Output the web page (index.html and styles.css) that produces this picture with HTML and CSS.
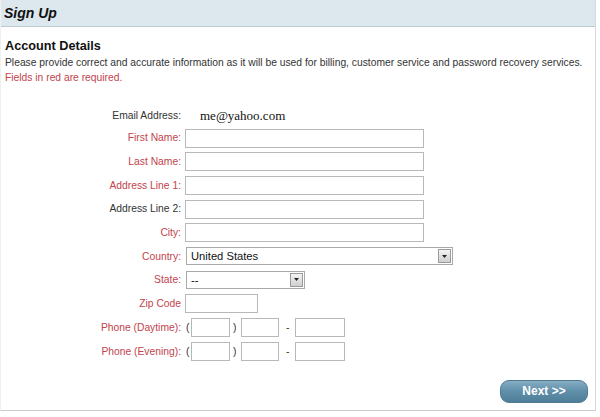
FILE: index.html
```html
<!DOCTYPE html>
<html lang="en">
<head>
    <meta charset="UTF-8">
    <title>Sign Up</title>
    <link rel="stylesheet" href="styles.css">
</head>
<body>
    <div class="page">
        <div class="header">Sign Up</div>

        <div class="intro">
            <h2>Account Details</h2>
            <p>Please provide correct and accurate information as it will be used for billing, customer service and password recovery services.</p>
            <p class="required">Fields in red are required.</p>
        </div>

        <div class="form">
            <label class="plain">Email Address:</label>
            <div class="email">me@yahoo.com</div>

            <label for="firstName">First Name:</label>
            <div><input type="text" id="firstName" class="wide"></div>

            <label for="lastName">Last Name:</label>
            <div><input type="text" id="lastName" class="wide"></div>

            <label for="addr1">Address Line 1:</label>
            <div><input type="text" id="addr1" class="wide"></div>

            <label for="addr2" class="plain">Address Line 2:</label>
            <div><input type="text" id="addr2" class="wide"></div>

            <label for="city">City:</label>
            <div><input type="text" id="city" class="wide"></div>

            <label for="country">Country:</label>
            <div>
                <span class="select country">
                    <select id="country">
                        <option>United States</option>
                        <option>Canada</option>
                    </select>
                    <span class="arrow"><svg width="5" height="3" viewBox="0 0 5 3"><path d="M0 0H5L2.5 3Z" fill="#222"/></svg></span>
                </span>
            </div>

            <label for="state">State:</label>
            <div>
                <span class="select state">
                    <select id="state">
                        <option>--</option>
                    </select>
                    <span class="arrow"><svg width="5" height="3" viewBox="0 0 5 3"><path d="M0 0H5L2.5 3Z" fill="#222"/></svg></span>
                </span>
            </div>

            <label for="zip">Zip Code</label>
            <div><input type="text" id="zip" class="zip"></div>

            <label>Phone (Daytime):</label>
            <div class="phone">
                <span>(</span><input type="text" class="area"><span class="close">)</span><input type="text" class="prefix"><span class="dash">-</span><input type="text" class="line">
            </div>

            <label>Phone (Evening):</label>
            <div class="phone">
                <span>(</span><input type="text" class="area"><span class="close">)</span><input type="text" class="prefix"><span class="dash">-</span><input type="text" class="line">
            </div>
        </div>

        <div class="footer">
            <button class="next">Next &gt;&gt;</button>
        </div>
    </div>
</body>
</html>
```

FILE: styles.css
```css
body {
    margin: 0;
    font-family: "Liberation Sans", Arial, sans-serif;
    background-color: #fff;
    color: #222;
}

.page {
    width: 594px;
    height: 410px;
    border-right: 1px solid #d4d9dc;
    border-bottom: 1px solid #c8cccf;
    border-left: 1px solid #eef0f1;
}

.header {
    height: 26px;
    line-height: 27px;
    background-color: #dce7ee;
    border-bottom: 1px solid #bccad3;
    padding-left: 3px;
    font-size: 14px;
    font-weight: bold;
    font-style: italic;
    color: #111;
}

.intro {
    padding: 11px 0 0 4px;
}

.intro h2 {
    font-size: 12.7px;
    line-height: 16px;
    margin: 0 0 1px;
    color: #111;
}

.intro p {
    font-size: 10.3px;
    line-height: 15px;
    margin: 0;
    color: #333;
}

.intro .required {
    color: #c2434e;
}

.form {
    display: grid;
    grid-template-columns: 180px 1fr;
    grid-template-rows: 21px;
    grid-auto-rows: 23.7px;
    column-gap: 4px;
    margin-top: 20px;
    align-items: center;
}

label {
    text-align: right;
    font-size: 10.3px;
    color: #c2434e;
}

label.plain {
    color: #333;
}

.email {
    padding-left: 15px;
    font-family: "Liberation Serif", "Times New Roman", serif;
    font-size: 13px;
    color: #111;
}

input {
    box-sizing: border-box;
    height: 19px;
    margin: 0;
    padding: 1px 3px;
    border: 1px solid #b8b8b8;
    background-color: #fff;
    font-size: 11px;
}

.wide {
    width: 239px;
}

.zip {
    width: 73px;
}

.select {
    display: flex;
    box-sizing: border-box;
    height: 18px;
    margin-left: 1px;
    border: 1px solid #a9a9a9;
    background-color: #fff;
}

.select select {
    flex: 1;
    appearance: none;
    border: none;
    outline: none;
    background: transparent;
    padding: 0 4px;
    font-family: "Liberation Sans", Arial, sans-serif;
    font-size: 11.2px;
    color: #111;
}

.select .arrow {
    display: flex;
    align-items: center;
    justify-content: center;
    width: 11px;
    margin: 1px;
    border: 1px solid #9a9a9a;
    background: linear-gradient(#f4f4f4, #cfcfcf);
}

.country {
    width: 267px;
}

.state {
    width: 119px;
}

.phone {
    display: flex;
    align-items: center;
    font-size: 10.3px;
    color: #333;
}

.phone span {
    width: 5px;
    padding-left: 1px;
}

.phone .close {
    width: 8px;
    padding-left: 3px;
}

.phone .dash {
    width: 9px;
    padding-left: 7px;
}

.area {
    width: 39px;
}

.prefix {
    width: 38px;
}

.line {
    width: 50px;
}

.footer {
    display: flex;
    justify-content: flex-end;
    padding-right: 7px;
    margin-top: 17px;
}

.next {
    width: 88px;
    height: 23px;
    border: 1px solid #4f7a92;
    border-radius: 9px;
    background: linear-gradient(#86adc3, #5f8ea9 50%, #4f7e99);
    color: #fff;
    font-family: "Liberation Sans", Arial, sans-serif;
    font-size: 12px;
    font-weight: bold;
    cursor: pointer;
}
```
